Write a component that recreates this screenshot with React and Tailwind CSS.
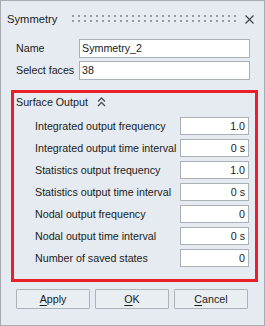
import React from 'react'

const rows = [
  ['Integrated output frequency', '1.0'],
  ['Integrated output time interval', '0 s'],
  ['Statistics output frequency', '1.0'],
  ['Statistics output time interval', '0 s'],
  ['Nodal output frequency', '0'],
  ['Nodal output time interval', '0 s'],
  ['Number of saved states', '0'],
]

function Grip() {
  // dotted drag handle in the title bar
  return (
    <svg width="168" height="8" className="ml-[15px] text-[#959ca2]">
      <defs>
        <pattern id="dots" width="6" height="5" patternUnits="userSpaceOnUse">
          <rect x="0" y="0" width="2" height="2" fill="currentColor" />
        </pattern>
      </defs>
      <rect x="0" y="0" width="168" height="7" fill="url(#dots)" />
    </svg>
  )
}

function Btn({ k, rest }) {
  return (
    <button className="w-[74px] h-[20px] border border-[#adb2b7] rounded-[1px] bg-[#e9eef2] text-[#1b1b1b] flex items-center justify-center">
      <span><span className="underline underline-offset-[2px]">{k}</span>{rest}</span>
    </button>
  )
}

export default function App() {
  return (
    <div
      className="w-[265px] h-[326px] border border-[#a7adb2] bg-[#e5ebf0] flex flex-col text-[10.7px] text-[#1b1b1b] overflow-hidden"
      style={{ fontFamily: '"Liberation Sans", Arial, sans-serif' }}
    >
      {/* title bar */}
      <div className="h-[36px] flex items-center pl-[6px] pr-[10px]">
        <span className="text-[11.2px]">Symmetry</span>
        <Grip />
        <svg width="9" height="9" viewBox="0 0 9 9" className="ml-auto">
          <path d="M0.5 0.5 L8.5 8.5 M8.5 0.5 L0.5 8.5" stroke="#3c3f42" strokeWidth="1.1" />
        </svg>
      </div>

      {/* name / faces */}
      <div className="mt-[2px] pl-[15px] flex flex-col gap-[3px]">
        <div className="flex items-center">
          <span className="w-[63px]">Name</span>
          <div className="w-[171px] h-[19px] border border-[#abb0b5] bg-white pl-[2px] flex items-center">Symmetry_2</div>
        </div>
        <div className="flex items-center">
          <span className="w-[63px]">Select faces</span>
          <div className="w-[171px] h-[19px] border border-[#abb0b5] bg-white pl-[2px] flex items-center">38</div>
        </div>
      </div>

      {/* surface output group */}
      <div className="ml-[10px] mt-[10px] w-[247px] border-[3px] border-[#e8202a] pb-[12px]">
        <div className="h-[18px] flex items-center pl-[2px] mb-[6px]">
          <span>Surface Output</span>
          <svg width="9" height="10" viewBox="0 0 9 10" className="ml-[9px]">
            <path d="M1 4.5 L4.5 1 L8 4.5 M1 9 L4.5 5.5 L8 9" fill="none" stroke="#4a4e52" strokeWidth="1.3" />
          </svg>
        </div>
        <div className="flex flex-col gap-[4px] pl-[21px]">
          {rows.map(([label, val]) => (
            <div key={label} className="flex items-center">
              <span className="w-[145px] whitespace-nowrap">{label}</span>
              <div className="w-[69px] h-[18px] border border-[#abb0b5] bg-white pr-[3px] flex items-center justify-end">{val}</div>
            </div>
          ))}
        </div>
      </div>

      {/* buttons */}
      <div className="mt-[7px] pl-[15px] flex gap-[5px]">
        <Btn k="A" rest="pply" />
        <Btn k="O" rest="K" />
        <Btn k="C" rest="ancel" />
      </div>
    </div>
  )
}
